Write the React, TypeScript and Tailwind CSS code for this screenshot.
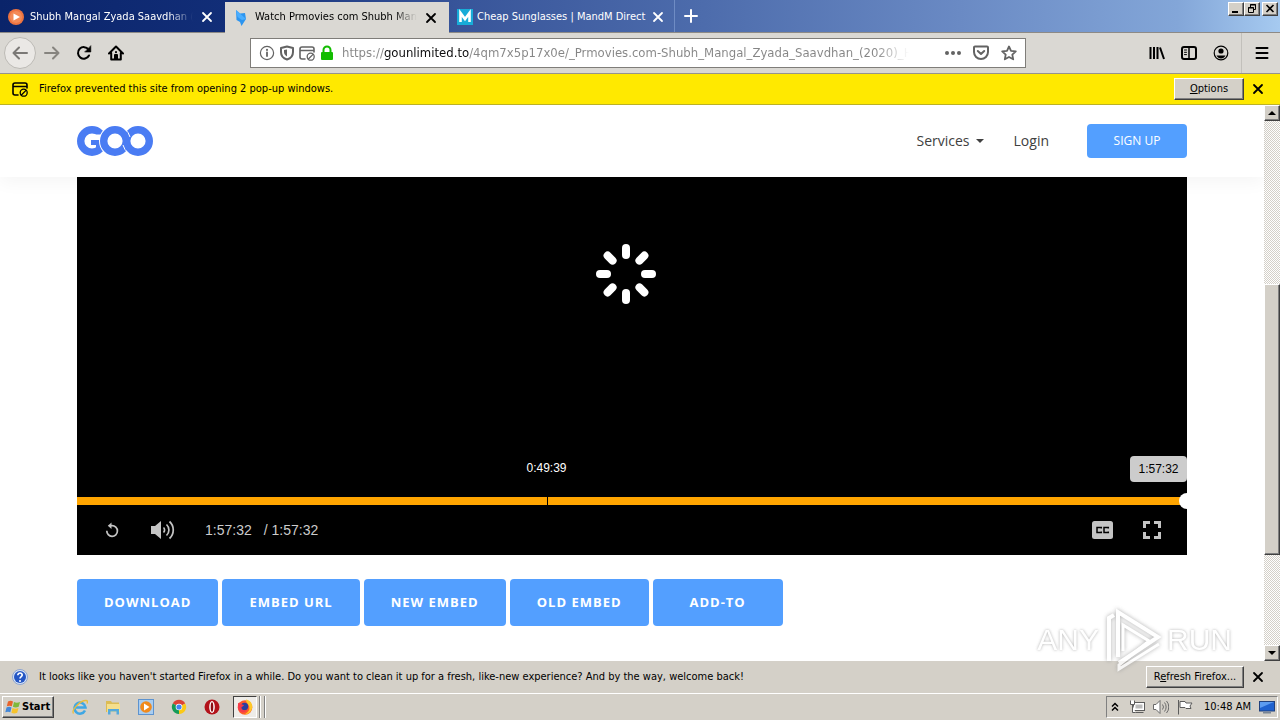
import { useState } from 'react'
import type { ReactNode } from 'react'

const raised =
  'border border-t-white border-l-white border-r-[#404040] border-b-[#404040] shadow-[inset_-1px_-1px_0_#808080] bg-[#d4d0c8]'

const actions = [
  { label: 'DOWNLOAD' },
  { label: 'EMBED URL' },
  { label: 'NEW EMBED' },
  { label: 'OLD EMBED' },
  { label: 'ADD-TO' },
]

function Icon({ children, className = 'size-4' }: { children: ReactNode; className?: string }) {
  return (
    <svg
      viewBox="0 0 16 16"
      className={`${className} shrink-0`}
      fill="none"
      stroke="currentColor"
      strokeWidth="2"
      strokeLinecap="round"
      strokeLinejoin="round"
      aria-hidden="true"
    >
      {children}
    </svg>
  )
}

function CloseIcon({ className }: { className?: string }) {
  return (
    <Icon className={className}>
      <path d="M4 4l8 8M12 4l-8 8" strokeWidth="1.8" />
    </Icon>
  )
}

function PopupBlockedIcon({ className }: { className?: string }) {
  return (
    <Icon className={className}>
      <path d="M6 14H3a2 2 0 0 1-2-2V4a2 2 0 0 1 2-2h10a2 2 0 0 1 2 2v3M1 5.5h14" strokeWidth="1.6" />
      <circle cx="11.7" cy="11.7" r="3.5" strokeWidth="1.3" />
      <path d="M9.4 14l4.6-4.6" strokeWidth="1.3" />
    </Icon>
  )
}

function TabStrip() {
  return (
    <div className="flex h-[33px] shrink-0 border-b border-[#8d8a86] bg-[linear-gradient(to_right,#0a246a,#122e78_18%,#38559a_36%,#4d6cac_55%,#6a8ac4_75%,#83a6d8_92%,#a6caf0)]">
      <div className="flex w-[225px] items-center gap-1.5 pt-0.5 pr-2.5 pl-2 text-white">
        <svg viewBox="0 0 16 16" className="size-4 shrink-0" aria-hidden="true">
          <circle cx="8" cy="8" r="8" fill="#ee7440" />
          <circle cx="8" cy="8" r="6" fill="#f48a57" />
          <path d="M5.5 4.5v7L12 8z" fill="#fff" />
        </svg>
        <span className="min-w-0 flex-1 overflow-hidden whitespace-nowrap mask-r-from-85% mask-r-to-100%">
          Shubh Mangal Zyada Saavdhan (2
        </span>
        <button type="button" aria-label="Close tab">
          <CloseIcon />
        </button>
      </div>
      <div className="mt-0.5 -mb-px flex w-[224px] items-center gap-1.5 bg-[#dad8d3] pr-2.5 pl-2 text-black">
        <svg viewBox="0 0 16 16" className="size-4 shrink-0" aria-hidden="true">
          <path d="M3 0l4 3.5L12 3l1 6-4.5 7L7 12 3.5 10z" fill="#2c95f0" />
          <path d="M3 0l1.5 7L9 10l4-1-6-5.5z" fill="#4aaeff" />
        </svg>
        <span className="min-w-0 flex-1 overflow-hidden whitespace-nowrap mask-r-from-85% mask-r-to-100%">
          Watch Prmovies com Shubh Manga
        </span>
        <button type="button" aria-label="Close tab">
          <CloseIcon />
        </button>
      </div>
      <div className="flex w-[226px] items-center gap-1 border-r border-[#6f8cc4] px-2 pt-0.5 text-white">
        <svg viewBox="0 0 16 16" className="size-4 shrink-0" aria-hidden="true">
          <rect width="16" height="16" fill="#18acd8" />
          <path d="M3.500 13V4L8 10l4.500-6v9" fill="none" stroke="#fff" strokeWidth="2.600" />
        </svg>
        <span className="flex-1 whitespace-nowrap">Cheap Sunglasses | MandM Direct</span>
        <button type="button" aria-label="Close tab">
          <CloseIcon />
        </button>
      </div>
      <button type="button" aria-label="New tab" className="px-2 text-white">
        <Icon>
          <path d="M8 2v12M2 8h12" />
        </Icon>
      </button>
      <div className="mt-0.5 mr-0.5 ml-auto flex h-3.5 text-black">
        <button type="button" aria-label="Minimize" className={`flex w-4 justify-center ${raised}`}>
          <svg viewBox="0 0 12 12" className="size-3" aria-hidden="true">
            <path d="M2 8h6v2H2z" />
          </svg>
        </button>
        <button type="button" aria-label="Restore" className={`mr-0.5 flex w-4 justify-center ${raised}`}>
          <svg viewBox="0 0 12 12" className="size-3" fill="none" stroke="currentColor" aria-hidden="true">
            <path d="M4.5 4V1.5h5v5H8M4 2h6M2.5 4.5h5v5h-5zM2 5h6" />
          </svg>
        </button>
        <button type="button" aria-label="Close" className={`flex w-4 justify-center ${raised}`}>
          <svg viewBox="0 0 12 12" className="size-3" stroke="currentColor" strokeWidth="1.6" aria-hidden="true">
            <path d="M2.5 2l7 7M9.5 2l-7 7" />
          </svg>
        </button>
      </div>
    </div>
  )
}

function Toolbar() {
  const [url, setUrl] = useState(
    'https://gounlimited.to/4qm7x5p17x0e/_Prmovies.com-Shubh_Mangal_Zyada_Saavdhan_(2020)_Hi'
  )

  return (
    <div className="flex h-[41px] shrink-0 items-center border-b border-[#96938d] bg-[#dad8d3] px-1 text-black">
      <button
        type="button"
        aria-label="Back"
        className="flex size-8 items-center justify-center rounded-full border border-[#bcbab5] bg-[#eae8e5] text-[#7b7976]"
      >
        <Icon>
          <path d="M15 8H1.5M7 2.5L1.5 8 7 13.5" />
        </Icon>
      </button>
      <button type="button" aria-label="Forward" className="px-2 text-[#86847f]">
        <Icon>
          <path d="M1 8h13.5M9 2.5L14.5 8 9 13.5" />
        </Icon>
      </button>
      <button type="button" aria-label="Reload" className="px-2">
        <Icon>
          <path d="M13 10.5A5.8 5.8 0 1 1 12.5 4.5" />
          <path d="M14.8 1v6H9z" fill="currentColor" strokeWidth="0.6" />
        </Icon>
      </button>
      <button type="button" aria-label="Home" className="px-2">
        <Icon>
          <path d="M1 8.5L8 1.5l7 7M3.2 8v6.5h9.6V8" />
          <path d="M7 14v-4h2v4" />
          <path d="M8 7v.2" />
        </Icon>
      </button>

      <div className="mr-[123px] ml-[118px] flex h-[30px] min-w-0 flex-1 items-center border border-[#7f7d79] bg-white px-2 text-[#636363]">
        <div className="flex items-center gap-1">
          <Icon>
            <circle cx="8" cy="8" r="6.6" strokeWidth="1.2" />
            <path d="M8 7.5v3.5" strokeWidth="1.8" />
            <path d="M8 4.8v.1" strokeWidth="2" />
          </Icon>
          <Icon>
            <path d="M8 1.5L14 3v4c0 3.5-2.500 6.500-6 7.500C4.500 13.500 2 10.500 2 7V3z" />
            <path d="M8 4.500v7C6 10.500 5 8.500 5 7V5z" fill="currentColor" stroke="none" />
          </Icon>
          <PopupBlockedIcon />
          <svg viewBox="0 0 16 16" className="size-4" aria-hidden="true">
            <path d="M4.500 8V5a3.500 3.500 0 0 1 7 0v3" fill="none" stroke="#12bc00" strokeWidth="2" />
            <rect x="2" y="7" width="12" height="8" rx="1" fill="#12bc00" />
          </svg>
        </div>
        <input
          type="text"
          aria-label="Address"
          value={url}
          onChange={(e) => setUrl(e.target.value)}
          className="ml-[7px] min-w-0 flex-1 bg-[linear-gradient(to_right,#858585_42px,#0c0c0d_42px,#0c0c0d_127px,#858585_127px)] bg-clip-text text-[13px] text-transparent outline-none mask-r-from-94% mask-r-to-100%"
        />
        <div className="ml-9 flex items-center gap-3">
          <button type="button" aria-label="Page actions">
            <svg viewBox="0 0 16 16" className="size-4" fill="currentColor" aria-hidden="true">
              <circle cx="2" cy="8" r="2" />
              <circle cx="8" cy="8" r="2" />
              <circle cx="14" cy="8" r="2" />
            </svg>
          </button>
          <button type="button" aria-label="Save to Pocket">
            <Icon>
              <path d="M2 1.500h12a1 1 0 0 1 1 1V7A7 7 0 0 1 1 7V2.500a1 1 0 0 1 1-1z" />
              <path d="M4.800 6L8 9l3.200-3" />
            </Icon>
          </button>
          <button type="button" aria-label="Bookmark this page">
            <Icon>
              <path d="M8 1.500l2 4.300 4.800.6-3.500 3.200.9 4.700L8 12l-4.200 2.300.9-4.700L1.200 6.400 6 5.800z" strokeWidth="1.800" />
            </Icon>
          </button>
        </div>
      </div>

      <div className="flex h-full items-center">
        <button type="button" aria-label="Library" className="mr-4">
          <Icon>
            <path d="M1.500 2v12M5 2v12M8.500 2v12M11 2.500L15 14" strokeLinecap="butt" />
          </Icon>
        </button>
        <button type="button" aria-label="Sidebars" className="mr-4">
          <Icon>
            <rect x="1" y="2" width="14" height="12" rx="2" />
            <path d="M8 2v12" strokeWidth="1.500" />
            <path d="M3.500 5h2M3.500 7.300h2M3.500 9.600h2" strokeWidth="1" />
          </Icon>
        </button>
        <button type="button" aria-label="Account" className="mr-3">
          <Icon>
            <circle cx="8" cy="8" r="6.800" strokeWidth="1.200" />
            <circle cx="8" cy="6" r="2.600" fill="currentColor" stroke="none" />
            <path d="M3.500 10.500h9c-1 2-2.500 3-4.500 3s-3.500-1-4.500-3z" fill="currentColor" stroke="none" />
          </Icon>
        </button>
        <span className="h-full border-l border-[#c2c0bb]" />
        <button type="button" aria-label="Menu" className="mr-1.5 ml-3">
          <Icon>
            <path d="M2.500 3h11M2.500 8h11M2.500 13h11" />
          </Icon>
        </button>
      </div>
    </div>
  )
}

function PopupNotice() {
  return (
    <div className="flex h-[31px] shrink-0 items-center border-b border-[#bdb327] bg-[#ffe900] px-3 text-black">
      <PopupBlockedIcon />
      <p className="ml-[11px]">Firefox prevented this site from opening 2 pop-up windows.</p>
      <button type="button" className={`ml-auto h-[22px] w-[70px] ${raised}`}>
        <span className="underline">O</span>ptions
      </button>
      <button type="button" aria-label="Dismiss" className="mr-0.5 ml-1.5">
        <CloseIcon />
      </button>
    </div>
  )
}

function SiteHeader() {
  return (
    <header className="relative z-10 h-[72px] shrink-0 bg-white shadow-[0_6px_16px_rgba(0,0,0,0.04)]">
      <div className="mx-auto flex h-full max-w-[1110px] items-center font-['Open_Sans',sans-serif] text-sm text-[#404040]">
        <a href="#home" aria-label="Goo">
          <svg viewBox="0 0 76 30" className="h-[30px] w-[76px]" fill="none" aria-hidden="true">
            <circle cx="15" cy="15" r="11.300" stroke="#4a7cf3" strokeWidth="7.400" />
            <path d="M17 8.500h12v5.500H17z" fill="#fff" />
            <path d="M14 14h9v10h-4v-5h-5z" fill="#4a7cf3" />
            <circle cx="61" cy="15" r="11.300" stroke="#4a7cf3" strokeWidth="7.400" />
            <circle cx="38" cy="15" r="12" stroke="#fff" strokeWidth="8" strokeDasharray="37.700" transform="rotate(90 38 15)" />
            <circle cx="38" cy="15" r="11.300" stroke="#4a7cf3" strokeWidth="7.400" />
            <path d="M48 3.100A15.500 15.500 0 0 1 53 11M46 19A15.500 15.500 0 0 0 51 26.900" stroke="#fff" />
          </svg>
        </a>
        <nav className="ml-auto flex items-center">
          <button type="button" className="flex items-center gap-1.5">
            Services
            <svg viewBox="0 0 8 4" className="h-1 w-2" fill="currentColor" aria-hidden="true">
              <path d="M0 0h8L4 4z" />
            </svg>
          </button>
          <a href="#login" className="ml-[30px]">
            Login
          </a>
          <a
            href="#signup"
            className="ml-[38px] flex h-[34px] w-[100px] items-center justify-center rounded bg-[#539fff] text-xs text-white"
          >
            SIGN UP
          </a>
        </nav>
      </div>
    </header>
  )
}

function Player() {
  const [position, setPosition] = useState(7052)

  return (
    <section
      aria-label="Video player"
      className="relative flex h-[378px] flex-col overflow-hidden bg-black font-['Liberation_Sans',Arial,sans-serif] text-[#ccc]"
    >
      <div className="flex flex-1 justify-center pt-[67px] pr-3">
        <svg viewBox="0 0 60 60" className="size-[60px]" stroke="#fff" strokeWidth="8" strokeLinecap="round" aria-hidden="true">
          {[0, 45, 90, 135, 180, 225, 270, 315].map((angle) => (
            <path key={angle} d="M30 4v7" transform={`rotate(${angle} 30 30)`} />
          ))}
        </svg>
      </div>

      <div className="relative h-2 shrink-0">
        <input
          type="range"
          aria-label="Seek"
          min={0}
          max={7052}
          value={position}
          onChange={(e) => setPosition(Number(e.target.value))}
          className="block h-2 w-[calc(100%+8px)] appearance-none bg-[#ffa500] [&::-webkit-slider-thumb]:size-4 [&::-webkit-slider-thumb]:appearance-none [&::-webkit-slider-thumb]:rounded-full [&::-webkit-slider-thumb]:bg-white"
        />
        <span className="absolute top-0 left-[42.3%] h-2 w-px bg-black" />
        <span className="absolute bottom-[29px] left-[42.3%] -translate-x-1/2 text-xs text-white">0:49:39</span>
        <span className="absolute right-0 bottom-[23px] flex h-[26px] w-[57px] items-center justify-center rounded bg-[#ccc] text-xs text-black">
          1:57:32
        </span>
      </div>

      <div className="flex h-[50px] shrink-0 items-center px-[26px] text-sm">
        <button type="button" aria-label="Replay" className="flex w-[18px] justify-center">
          <svg viewBox="0 0 16 16" className="size-4" fill="none" stroke="#c4c4c4" strokeWidth="1.700" aria-hidden="true">
            <path d="M2.800 8.800A5.300 5.300 0 1 0 8 3.700H6" />
            <path d="M7.500.500v6.500L3.800 3.700z" fill="#c4c4c4" stroke="none" />
          </svg>
        </button>
        <button type="button" aria-label="Mute" className="ml-[30px]">
          <svg viewBox="0 0 24 20" className="h-5 w-6" fill="none" stroke="#c4c4c4" strokeWidth="1.700" aria-hidden="true">
            <path d="M0 6h4l6-5v18l-6-5H0z" fill="#c4c4c4" stroke="none" />
            <path d="M12.500 7.500a3.500 3.500 0 0 1 0 5M15.500 4.500a7.500 7.500 0 0 1 0 11M18.500 1.500a11.500 11.500 0 0 1 0 17" />
          </svg>
        </button>
        <span className="ml-[30px]">1:57:32</span>
        <span className="ml-3">/ 1:57:32</span>
        <button type="button" aria-label="Captions" className="ml-auto">
          <svg viewBox="0 0 21 18" className="h-[18px] w-[21px]" aria-hidden="true">
            <rect width="21" height="18" rx="2.500" fill="#c4c4c4" />
            <path
              d="M9.300 7.500V6.500H5v5h4.300v-1M16.300 7.500V6.500H12v5h4.300v-1"
              fill="none"
              stroke="#000"
              strokeWidth="1.500"
            />
          </svg>
        </button>
        <button type="button" aria-label="Fullscreen" className="ml-[30px]">
          <svg viewBox="0 0 18 18" className="size-[18px]" fill="none" stroke="#c4c4c4" strokeWidth="3" aria-hidden="true">
            <path d="M1.500 7V1.500H7M11 1.500h5.500V7M16.500 11v5.500H11M7 16.500H1.500V11" />
          </svg>
        </button>
      </div>
    </section>
  )
}

function ScrollBar() {
  return (
    <div
      aria-hidden="true"
      className="flex w-4 shrink-0 flex-col bg-[repeating-conic-gradient(#d4d0c8_0_25%,#fff_0_50%)] bg-size-[2px_2px]"
    >
      <div className={`flex h-4 shrink-0 items-center justify-center ${raised}`}>
        <svg viewBox="0 0 8 4" className="h-1 w-2">
          <path d="M4 0l4 4H0z" />
        </svg>
      </div>
      <div className="grow-[164]" />
      <div className={`grow-[270] ${raised}`} />
      <div className="grow-[90]" />
      <div className={`flex h-4 shrink-0 items-center justify-center ${raised}`}>
        <svg viewBox="0 0 8 4" className="h-1 w-2">
          <path d="M0 0h8L4 4z" />
        </svg>
      </div>
    </div>
  )
}

function Watermark() {
  return (
    <div className="pointer-events-none absolute right-12 -bottom-3 z-20 flex items-center gap-1 font-['Liberation_Sans_Narrow','Liberation_Sans',sans-serif] text-[30px] leading-none text-white opacity-80 [text-shadow:0_0_3px_#999]">
      <span>ANY</span>
      <svg
        viewBox="0 0 60 66"
        className="h-[66px] w-[60px] drop-shadow-[0_0_2px_#999]"
        fill="none"
        stroke="#fff"
        strokeWidth="4"
        aria-hidden="true"
      >
        <path d="M6 54V11l5-3" />
        <path d="M15 50V5l40 25-39 26" />
        <path d="M20 44V18l26 16-30 24v4l40-25" strokeWidth="3" />
      </svg>
      <span>RUN</span>
    </div>
  )
}

function RefreshNotice() {
  return (
    <div className="flex h-8 shrink-0 items-center bg-[#d4d0c8] px-3 text-black">
      <svg viewBox="0 0 16 16" className="size-4" aria-hidden="true">
        <circle cx="8" cy="8" r="7.500" fill="#d7e3f6" stroke="#8da4cf" />
        <circle cx="8" cy="8" r="6" fill="#2456c4" />
        <path d="M5.800 6.200c0-3 4.600-2.800 4.400 0C10 7.500 8 7.800 8 9.500" fill="none" stroke="#fff" strokeWidth="1.600" />
        <circle cx="8" cy="11.900" r="1" fill="#fff" />
      </svg>
      <p className="ml-[11px]">
        It looks like you haven't started Firefox in a while. Do you want to clean it up for a fresh, like-new
        experience? And by the way, welcome back!
      </p>
      <button type="button" className={`ml-auto h-[22px] w-[98px] whitespace-nowrap ${raised}`}>
        R<span className="underline">e</span>fresh Firefox...
      </button>
      <button type="button" aria-label="Dismiss" className="mr-0.5 ml-1.5">
        <CloseIcon />
      </button>
    </div>
  )
}

function TaskBar() {
  return (
    <div className="flex h-[27px] shrink-0 items-center border-t border-white bg-[#d4d0c8] px-0.5 text-black">
      <button type="button" className={`flex h-[22px] w-[52px] items-center gap-px pl-0.5 font-bold ${raised}`}>
        <svg viewBox="0 0 16 16" className="size-4 shrink-0" aria-hidden="true">
          <path d="M3 2.500c2-1 3.500-.8 5 0L6.800 7.300c-1.500-.8-3-.8-5 0z" fill="#e8632b" />
          <path d="M9 3c2 1 4 .8 6 0l-1.300 4.800c-2 .8-4 .8-5.800 0z" fill="#7fb93c" />
          <path d="M1.500 8.500c2-1 3.500-.8 5 0L5.300 13.300c-1.500-.8-3-.8-5 0z" fill="#4387d8" />
          <path d="M7.500 9c2 1 4 .8 6 0l-1.300 4.800c-2 .8-4 .8-5.800 0z" fill="#f6c32c" />
        </svg>
        Start
      </button>

      <div className="ml-[18px] flex items-center gap-[17px]">
        <button type="button" aria-label="Internet Explorer">
          <svg viewBox="0 0 16 16" className="size-4" fill="none" aria-hidden="true">
            <path d="M13 11.500A5.500 5.500 0 1 1 13.500 8.500H4" stroke="#3fa7e4" strokeWidth="2.500" />
            <path d="M1.500 14.500C-1 11 8 1.500 14 1.500c2 0 1.500 2 1 3" stroke="#e9bd3c" strokeWidth="1.300" />
          </svg>
        </button>
        <button type="button" aria-label="Explorer">
          <svg viewBox="0 0 16 16" className="size-4" aria-hidden="true">
            <path d="M1 2h5l1 1.500h7V13H1z" fill="#dcbc55" />
            <path d="M2 5h13v8H2z" fill="#f5df8c" />
            <path d="M3 15.500V10h11v5.500h-2.500v-3h-6v3z" fill="#55a9dc" />
          </svg>
        </button>
        <button type="button" aria-label="Media Player">
          <svg viewBox="0 0 16 16" className="size-4" aria-hidden="true">
            <rect x=".5" y=".5" width="15" height="15" fill="#a9cdf0" stroke="#5d93cf" />
            <circle cx="8" cy="8" r="5.800" fill="#f08a1d" />
            <path d="M6 4.500v7L11.500 8z" fill="#fff" />
          </svg>
        </button>
        <button type="button" aria-label="Chrome">
          <svg viewBox="0 0 16 16" className="size-4" aria-hidden="true">
            <path d="M8 8L1.800 4.500a7 7 0 0 1 12.400 0z" fill="#dc4437" />
            <path d="M8 8l6.200-3.500A7 7 0 0 1 8 15z" fill="#fbc916" />
            <path d="M8 8v7A7 7 0 0 1 1.800 4.500z" fill="#159b58" />
            <circle cx="8" cy="8" r="3.300" fill="#fff" />
            <circle cx="8" cy="8" r="2.600" fill="#4285f4" />
          </svg>
        </button>
        <button type="button" aria-label="Opera">
          <svg viewBox="0 0 16 16" className="size-4" aria-hidden="true">
            <circle cx="8" cy="8" r="7.500" fill="#b3121a" />
            <ellipse cx="8" cy="8" rx="2.800" ry="6" fill="#fff" />
            <ellipse cx="8" cy="8" rx="1.300" ry="4.800" fill="#8d0c12" />
          </svg>
        </button>
      </div>

      <button
        type="button"
        aria-label="Firefox"
        className="ml-[13px] flex h-[22px] w-6 items-center justify-center border border-t-[#404040] border-r-white border-b-white border-l-[#404040] bg-[#eeece8]"
      >
        <svg viewBox="0 0 16 16" className="size-4" aria-hidden="true">
          <circle cx="8" cy="8.500" r="7.300" fill="#ff5a2a" />
          <path d="M9 .5c5 1 7 5 6 9-1 4-4.500 6.300-8 6 5-2 6-5 5-8.500C11 4.500 9 4 9 .5z" fill="#ffc928" />
          <circle cx="7.500" cy="7.500" r="3.700" fill="#2b3f9e" />
          <path d="M1 4c2 0 3 1.500 6 2-1 2-3 1.500-2.500 3.500S8 12 10 11c-2 4-8 3-9-2z" fill="#f53a4a" />
        </svg>
      </button>
      <div className="flex h-[22px] gap-[3px] pl-0.5">
        <span className="border-r border-l border-r-white border-l-[#808080]" />
        <span className="border-r border-l border-r-white border-l-[#808080]" />
      </div>

      <div className="ml-auto flex h-[22px] items-center border border-t-[#808080] border-r-white border-b-white border-l-[#808080] pr-0.5 pl-1">
        <svg viewBox="0 0 8 10" className="h-2.5 w-2" fill="none" stroke="#000" strokeWidth="1.500" aria-hidden="true">
          <path d="M1 4.500L4 1.500l3 3M1 8.500l3-3 3 3" />
        </svg>
        <svg viewBox="0 0 16 16" className="ml-2.5 size-4" fill="#fff" stroke="#5c5c5c" aria-hidden="true">
          <rect x="4.500" y="3.500" width="11" height="8" />
          <path d="M6.500 13.500h8M1.500 1.500v4h4v-4M3.500 5.500v8h3" />
          <rect x="6.500" y="5.500" width="7" height="4" fill="#bbb" stroke="none" />
        </svg>
        <svg viewBox="0 0 16 16" className="ml-2 size-4" fill="none" stroke="#6a6a6a" aria-hidden="true">
          <path d="M.5 5.500H3l4-4v13l-4-4H.5z" fill="#fff" />
          <path d="M9.500 5.500a4 4 0 0 1 0 5M11.500 3.500a7 7 0 0 1 0 9M13.500 2a9 9 0 0 1 0 12" />
        </svg>
        <svg viewBox="0 0 16 16" className="ml-2 size-4" fill="#fff" stroke="#5c5c5c" aria-hidden="true">
          <path d="M1.500 1v14.500M3 2.500h5l1 1.500h6l-2 3 1 2.500H9L8 8.500H3z" />
        </svg>
        <time className="ml-[11px]">10:48 AM</time>
        <svg viewBox="0 0 16 14" className="ml-2 h-3.5 w-4" aria-hidden="true">
          <rect x=".5" y="1.500" width="15" height="9.500" fill="#1f62cf" stroke="#20417d" />
          <path d="M1 2h14L1 8z" fill="#5c9cf0" />
          <path d="M4 12h8v1.500H4z" fill="#7a8695" />
        </svg>
      </div>
    </div>
  )
}

export default function App() {
  return (
    <div className="flex h-screen flex-col overflow-hidden bg-white font-['DejaVu_Sans_Condensed','DejaVu_Sans',Tahoma,sans-serif] text-[11px]">
      <TabStrip />
      <Toolbar />
      <PopupNotice />
      <div className="relative flex min-h-0 flex-1">
        <div className="flex min-w-0 flex-1 flex-col">
          <SiteHeader />
          <main className="mx-auto w-full max-w-[1110px]">
            <Player />
            <div className="mt-6 flex flex-wrap gap-1 font-['Open_Sans',sans-serif] text-[13px] font-bold tracking-[1px] text-white">
              {actions.map((action) => (
                <button
                  key={action.label}
                  type="button"
                  className="h-[47px] min-w-[130px] rounded bg-[#539fff] px-[27px]"
                >
                  {action.label}
                </button>
              ))}
            </div>
          </main>
        </div>
        <ScrollBar />
        <Watermark />
      </div>
      <RefreshNotice />
      <TaskBar />
    </div>
  )
}
